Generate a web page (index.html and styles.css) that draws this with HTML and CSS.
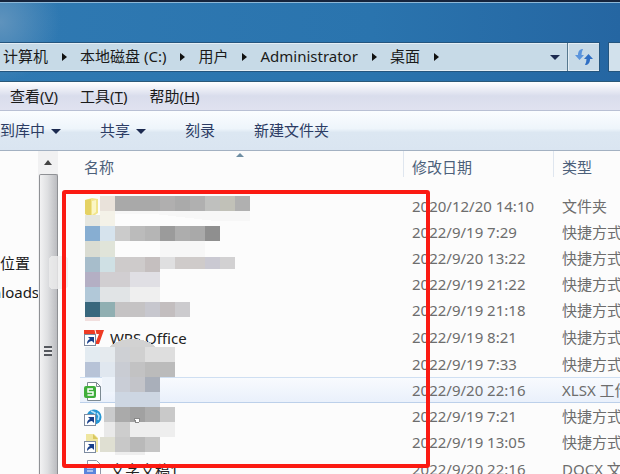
FILE: index.html
```html
<!DOCTYPE html>
<html lang="zh-CN">
<head>
    <meta charset="UTF-8">
    <meta name="viewport" content="width=device-width, initial-scale=1.0">
    <title>桌面</title>
    <link rel="stylesheet" href="styles.css">
</head>
<body>
    <div class="window">
        <header class="glass">
            <nav class="address">
                <a href="#">计算机</a><i class="arrow"></i>
                <a href="#">本地磁盘 (C:)</a><i class="arrow"></i>
                <a href="#">用户</a><i class="arrow"></i>
                <a href="#">Administrator</a><i class="arrow"></i>
                <a href="#">桌面</a><i class="arrow"></i>
                <button class="history" aria-label="历史"><i class="caret"></i></button>
                <button class="refresh" aria-label="刷新">
                    <svg width="18" height="18" viewBox="0 0 18 18">
                        <path d="M8 1C5 1 3 3 3 7H0l4.500 5L9 7H6.500C6.500 5 7 3 8 1z" fill="#5a94dc"/>
                        <path d="M10 17c3 0 5-2 5-6h3l-4.500-5L9 11h2.500c0 2-.5 4-1.500 6z" fill="#2f6fc4"/>
                    </svg>
                </button>
            </nav>
            <div class="search"></div>
        </header>

        <nav class="menu">
            <a href="#">查看(<u>V</u>)</a>
            <a href="#">工具(<u>T</u>)</a>
            <a href="#">帮助(<u>H</u>)</a>
        </nav>

        <div class="toolbar">
            <button>到库中<i class="caret"></i></button>
            <button>共享<i class="caret"></i></button>
            <button>刻录</button>
            <button>新建文件夹</button>
        </div>

        <div class="content">
            <aside class="sidebar">
                <a href="#">位置</a>
                <a href="#" class="cut">nloads</a>
            </aside>
            <div class="scrollbar">
                <i class="up"></i>
                <div class="thumb"><i class="grip"></i></div>
            </div>
            <main class="list">
                <table>
                    <thead>
                        <tr>
                            <th class="name"><i class="sort"></i>名称</th>
                            <th class="date">修改日期</th>
                            <th>类型</th>
                        </tr>
                    </thead>
                    <tbody>
                        <tr>
                            <td>
                                <svg class="icon" width="18" height="22" viewBox="0 0 18 22">
                                    <path d="M1 3l7-2 6 1v14l-6 4-7-3z" fill="#f1e58c"/>
                                    <path d="M1 3l6-1v18l-6-3z" fill="#e5d264"/>
                                    <path d="M8 4l4-1v12l-4 3z" fill="#fbf6c4"/>
                                </svg>
                            </td>
                            <td>2020/12/20 14:10</td><td>文件夹</td>
                        </tr>
                        <tr><td></td><td>2022/9/19 7:29</td><td>快捷方式</td></tr>
                        <tr><td></td><td>2022/9/20 13:22</td><td>快捷方式</td></tr>
                        <tr><td></td><td>2022/9/19 21:22</td><td>快捷方式</td></tr>
                        <tr><td></td><td>2022/9/19 21:18</td><td>快捷方式</td></tr>
                        <tr>
                            <td>
                                <svg class="icon" width="20" height="18" viewBox="0 0 20 18">
                                    <path d="M0 1h20l-5 14h-4l4-10h-3l-2 5-2-5H0z" fill="#ee3b24"/>
                                    <path d="M11 1l1 4" stroke="#fff" stroke-width="1"/>
                                    <rect x=".5" y="5.500" width="11" height="11" fill="#fff" stroke="#7d8ba0"/>
                                    <path d="M3 15c0-3 1-4 3-5L4 8h6v6L8 12c-2 0-3 1-5 3z" fill="#173f8a"/>
                                </svg>
                                <span>WPS Office</span>
                            </td>
                            <td>2022/9/19 8:21</td><td>快捷方式</td>
                        </tr>
                        <tr><td></td><td>2022/9/19 7:33</td><td>快捷方式</td></tr>
                        <tr class="selected">
                            <td>
                                <svg class="icon" width="20" height="22" viewBox="0 0 20 22">
                                    <path d="M3.500 1.500h9l4 4v14h-13z" fill="#fff" stroke="#7c8a92"/>
                                    <path d="M12.500 1.500v4h4" fill="none" stroke="#7c8a92"/>
                                    <rect x="0" y="5" width="12" height="12" rx="2" fill="#3fae3c"/>
                                    <path d="M9 8H4v3h5v3H3.500" fill="none" stroke="#fff" stroke-width="1.500"/>
                                </svg>
                            </td>
                            <td>2022/9/20 22:16</td><td>XLSX 工作表</td>
                        </tr>
                        <tr>
                            <td>
                                <svg class="icon" width="20" height="18" viewBox="0 0 20 18">
                                    <circle cx="10" cy="8" r="7.500" fill="#2596d3"/>
                                    <path d="M7 2l4 2-1 3M13 4l2 3-1 4" fill="none" stroke="#b4e1f7" stroke-width="1.500"/>
                                    <rect x=".5" y="5.500" width="11" height="11" fill="#fff" stroke="#7d8ba0"/>
                                    <path d="M3 15c0-3 1-4 3-5L4 8h6v6L8 12c-2 0-3 1-5 3z" fill="#173f8a"/>
                                </svg>
                            </td>
                            <td>2022/9/19 7:21</td><td>快捷方式</td>
                        </tr>
                        <tr>
                            <td>
                                <svg class="icon" width="20" height="20" viewBox="0 0 20 20">
                                    <path d="M2 0h8l4 4v14H2z" fill="#efe6a0"/>
                                    <path d="M9 0v5h5" fill="#d9c860"/>
                                    <rect x=".5" y="7.500" width="11" height="11" fill="#fff" stroke="#7d8ba0"/>
                                    <path d="M3 17c0-3 1-4 3-5l-2-2h6v6l-2-2c-2 0-3 1-5 3z" fill="#173f8a"/>
                                </svg>
                            </td>
                            <td>2022/9/19 13:05</td><td>快捷方式</td>
                        </tr>
                        <tr>
                            <td>
                                <svg class="icon" width="20" height="22" viewBox="0 0 20 22">
                                    <path d="M3.500 1.500h9l4 4v14h-13z" fill="#fff" stroke="#8c96a8"/>
                                    <rect x="0" y="5" width="12" height="12" rx="2" fill="#5b85dc"/>
                                    <path d="M3 9h6M3 12h6" stroke="#fff"/>
                                </svg>
                                <span>文字文稿1</span>
                            </td>
                            <td>2022/9/20 22:16</td><td>DOCX 文档</td>
                        </tr>
                    </tbody>
                </table>
            </main>

            <!-- mosaic over the file names, 15px blocks -->
            <svg class="mosaic" width="180" height="262" viewBox="0 0 180 262" shape-rendering="crispEdges">
                <rect x="-36" y="60" width="19" height="33" rx="4" fill="#eee" opacity=".8"/>
                <g>
                    <rect x="15" y="0" width="15" height="15" fill="#e9e2da"/>
                    <rect x="30" y="0" width="45" height="15" fill="#a9a9a9"/>
                    <rect x="75" y="0" width="15" height="15" fill="#b0afaf"/>
                    <rect x="90" y="0" width="15" height="15" fill="#aaa"/>
                    <rect x="105" y="0" width="15" height="15" fill="#b0b0b0"/>
                    <rect x="120" y="0" width="15" height="15" fill="#bfc0be"/>
                    <rect x="135" y="0" width="15" height="15" fill="#c1c1b8"/>
                    <rect x="150" y="0" width="15" height="15" fill="#b0b0b0"/>
                    <rect x="0" y="19" width="15" height="11" fill="#e6e7e0"/>
                    <rect x="15" y="15" width="15" height="15" fill="#f4f2e8"/>
                    <path d="M30 15h135v10H130L70 18H30z" fill="#f7f7f7"/>
                </g>
                <g>
                    <rect x="0" y="30" width="15" height="15" fill="#87aed2"/>
                    <rect x="15" y="30" width="15" height="15" fill="#d6e3ed"/>
                    <rect x="30" y="30" width="15" height="15" fill="#cbcbcb"/>
                    <rect x="45" y="30" width="15" height="15" fill="#bbb"/>
                    <rect x="60" y="30" width="15" height="15" fill="#b5b5b5"/>
                    <rect x="75" y="30" width="15" height="15" fill="#9b9b9b"/>
                    <rect x="90" y="30" width="15" height="15" fill="#adadad"/>
                    <rect x="105" y="30" width="15" height="15" fill="#a9a9a9"/>
                    <rect x="120" y="30" width="15" height="15" fill="#8f8f8f"/>
                    <rect x="0" y="45" width="15" height="16" fill="#dadcd2"/>
                    <rect x="15" y="45" width="15" height="16" fill="#e0e4d9"/>
                    <rect x="75" y="45" width="45" height="16" fill="#f7f7f7"/>
                </g>
                <g>
                    <rect x="0" y="61" width="15" height="15" fill="#a7bdcb"/>
                    <rect x="15" y="61" width="15" height="15" fill="#cfe0e4"/>
                    <rect x="30" y="61" width="30" height="15" fill="#cecbcb"/>
                    <rect x="60" y="61" width="15" height="15" fill="#c5bfbf"/>
                    <rect x="75" y="61" width="15" height="12" fill="#dfdfe0"/>
                    <rect x="90" y="61" width="30" height="12" fill="#cfcbca"/>
                    <rect x="120" y="61" width="15" height="12" fill="#cac9d2"/>
                    <rect x="135" y="61" width="15" height="12" fill="#d2d1d2"/>
                    <rect x="0" y="76" width="15" height="15" fill="#b4afc4"/>
                    <rect x="15" y="76" width="30" height="15" fill="#d1ced1"/>
                    <rect x="45" y="76" width="30" height="15" fill="#e0dfe4"/>
                    <rect x="0" y="91" width="15" height="15" fill="#b1c8d8"/>
                    <rect x="15" y="91" width="30" height="15" fill="#e1e4e6"/>
                    <rect x="45" y="91" width="30" height="15" fill="#efefef"/>
                </g>
                <g>
                    <rect x="0" y="106" width="15" height="15" fill="#38677d"/>
                    <rect x="15" y="106" width="15" height="15" fill="#90afb2"/>
                    <rect x="30" y="106" width="30" height="15" fill="#c5c3c4"/>
                    <rect x="60" y="106" width="15" height="15" fill="#c7c7ce"/>
                    <rect x="75" y="106" width="15" height="15" fill="#c3bebf"/>
                    <rect x="90" y="106" width="15" height="15" fill="#cccbce"/>
                    <rect x="0" y="121" width="15" height="4" fill="#f1dfde"/>
                </g>
                <g>
                    <path d="M24 151c6-5 12-8 22-8 12 0 18 2 25 8z" fill="#d2d2d2"/>
                    <rect x="0" y="151" width="15" height="15" fill="#e3ebf1"/>
                    <rect x="15" y="151" width="15" height="15" fill="#e5eaee"/>
                    <rect x="30" y="151" width="15" height="15" fill="#ced0d4"/>
                    <rect x="45" y="151" width="15" height="15" fill="#d0d0d0"/>
                    <rect x="60" y="151" width="30" height="15" fill="#dedede"/>
                    <rect x="0" y="166" width="15" height="15" fill="#b7c3d7"/>
                    <rect x="15" y="166" width="15" height="15" fill="#e0e7ef"/>
                    <rect x="30" y="166" width="15" height="15" fill="#c9ccd3"/>
                    <rect x="45" y="166" width="15" height="15" fill="#c2c2c3"/>
                    <rect x="60" y="166" width="30" height="15" fill="#bbb"/>
                    <rect x="17" y="181" width="13" height="15" fill="#edf3fa"/>
                    <rect x="30" y="181" width="15" height="15" fill="#c9cdd6"/>
                    <rect x="45" y="181" width="15" height="15" fill="#c3c4c9"/>
                    <rect x="60" y="181" width="15" height="15" fill="#a9afba"/>
                    <rect x="30" y="196" width="45" height="15" fill="#cdd6e2"/>
                </g>
                <g>
                    <rect x="19" y="211" width="11" height="15" fill="#cacbcc"/>
                    <rect x="30" y="211" width="15" height="15" fill="#aaa"/>
                    <rect x="45" y="211" width="15" height="15" fill="#a1a1a1"/>
                    <rect x="60" y="211" width="15" height="15" fill="#adadad"/>
                    <rect x="75" y="211" width="15" height="15" fill="#c9c9c9"/>
                    <rect x="19" y="226" width="11" height="15" fill="#e9e9e9"/>
                    <rect x="30" y="226" width="15" height="15" fill="#cdcdcd"/>
                    <rect x="45" y="226" width="45" height="15" fill="#eee"/>
                    <path d="M49 222h6l-1 4-3 1z" fill="#fff" stroke="#888"/>
                    <rect x="15" y="241" width="15" height="15" fill="#dfdfd2"/>
                    <rect x="30" y="241" width="15" height="15" fill="#c8c8c8"/>
                    <rect x="45" y="241" width="15" height="15" fill="#b9b9b9"/>
                    <rect x="60" y="241" width="15" height="15" fill="#c5c5c5"/>
                    <rect x="30" y="256" width="30" height="3" fill="#eee"/>
                </g>
            </svg>
            <div class="marker"></div>
        </div>
    </div>
</body>
</html>
```

FILE: styles.css
```css
* {
    box-sizing: border-box;
}

body {
    margin: 0;
    font-family: "Noto Sans", "Noto Sans CJK SC", sans-serif;
    font-size: 15px;
    line-height: 20px;
    color: #1a1a1a;
    overflow: hidden;
}

a {
    color: inherit;
    text-decoration: none;
}

button {
    font: inherit;
    color: inherit;
    background: none;
    border: 0;
    padding: 0;
}

.window {
    height: 100vh;
    display: flex;
    flex-direction: column;
    white-space: nowrap;
    overflow: hidden;
}

/* title and address bar */
.glass {
    display: flex;
    gap: 8px;
    padding: 40px 0 9px;
    border-top: 2px solid #16243c;
    border-bottom: 1px solid #2b5878;
    box-shadow: inset 0 1px #8db8d8;
    background: radial-gradient(circle at 0 20px, #5f93bd, transparent 60px),
        linear-gradient(90deg, #2f79b2, #2a74ae 60%, #2566a2);
}

.address {
    flex: 1;
    display: flex;
    align-items: center;
    height: 30px;
    padding: 0 0 2px 3px;
    background: #c7dae7;
    border: 1px solid #24557e;
    border-left: 0;
    box-shadow: inset 0 1px #e4eef5, inset 0 -1px #e4eef5;
}

.arrow {
    margin: 2px 13px 0 14px;
    border-left: 5px solid #111;
    border-top: 4px solid transparent;
    border-bottom: 4px solid transparent;
}

.caret {
    display: inline-block;
    border-top: 5px solid #1c2a50;
    border-left: 5px solid transparent;
    border-right: 5px solid transparent;
}

.history {
    display: flex;
    margin-left: auto;
    padding: 2px 7px 0;
}

.refresh {
    display: flex;
    align-items: center;
    justify-content: center;
    width: 32px;
    height: 28px;
    margin-bottom: -2px;
    border-left: 1px solid #56788f;
    box-shadow: inset 1px 0 #e4eef5;
}

.search {
    width: 12px;
    height: 30px;
    background: #d2e1ec;
    border: 1px solid #24557e;
    border-right: 0;
}

.menu {
    display: flex;
    gap: 22px;
    height: 29px;
    padding: 4px 10px;
    background: linear-gradient(#fff, #f0f1f8 20%, #d9ddec 50%, #e0e2f0);
    border-bottom: 1px solid #b9c0d4;
}

.toolbar {
    display: flex;
    align-items: center;
    gap: 39px;
    height: 40px;
    padding-bottom: 2px;
    color: #2c3c64;
    background: linear-gradient(#fbfdff, #eef5fb 45%, #dce7f2 55%, #dae5f1);
    border-bottom: 1px solid #a3b1c2;
}

.toolbar .caret {
    margin-left: 6px;
    vertical-align: middle;
}

.content {
    position: relative;
    flex: 1;
    min-height: 0;
    display: flex;
    background: #fcfcfc;
    overflow: hidden;
}

.sidebar {
    width: 38px;
    display: flex;
    flex-direction: column;
    gap: 9px;
    padding-top: 102px;
    overflow: hidden;
}

.sidebar .cut {
    margin-left: -8px;
}

.scrollbar {
    width: 20px;
    display: flex;
    flex-direction: column;
    align-items: center;
    background: #f1f1f2;
}

.up {
    margin: 9px 0 9px;
    border-bottom: 5px solid #444;
    border-left: 4px solid transparent;
    border-right: 4px solid transparent;
}

.thumb {
    flex: 1;
    width: 19px;
    display: flex;
    justify-content: center;
    padding-top: 171px;
    background: linear-gradient(90deg, #f2f2f3, #dedfe1 45%, #bbbcc0);
    border: 1px solid #8f9195;
    border-bottom: 0;
    border-radius: 2px 2px 0 0;
}

.grip {
    width: 8px;
    height: 10px;
    background: repeating-linear-gradient(#55585e 0 2px, #e8e8ea 2px 4px);
}

/* file list */
.list {
    flex: 1;
    min-width: 0;
    padding-left: 22px;
    overflow: hidden;
}

table {
    width: 100%;
    height: 332px;
    table-layout: fixed;
    border-collapse: separate;
    border-spacing: 0;
    color: #6d6d6d;
}

th,
td {
    padding: 0 0 0 8px;
    text-align: left;
    font-weight: normal;
}

th {
    height: 42px;
    padding-top: 6px;
    vertical-align: top;
    color: #4c607a;
    background: linear-gradient(#dfe6ef, #dfe6ef) right top / 1px 26px no-repeat;
}

th:last-child {
    background: none;
}

th:first-child,
td:first-child {
    padding-left: 4px;
}

.name {
    position: relative;
    width: 324px;
}

.date {
    width: 150px;
}

.sort {
    position: absolute;
    top: 2px;
    left: 48%;
    border-bottom: 4px solid #6f8ea3;
    border-left: 4px solid transparent;
    border-right: 4px solid transparent;
}

td span {
    margin-left: 2px;
    color: #222;
    vertical-align: middle;
}

/* negative margin keeps tall icons from stretching their row */
.icon {
    display: inline-block;
    margin: -4px 0;
    vertical-align: middle;
}

.selected td {
    background: linear-gradient(#f9fbfe, #e9f0fb);
    box-shadow: inset 0 1px #cfdff2, inset 0 -1px #bcd0ea;
}

.mosaic {
    position: absolute;
    top: 45px;
    left: 85px;
    overflow: visible;
}

.marker {
    position: absolute;
    top: 39px;
    left: 62px;
    width: 368px;
    height: 278px;
    border: 4px solid #fb1a12;
    border-radius: 3px;
}
```
